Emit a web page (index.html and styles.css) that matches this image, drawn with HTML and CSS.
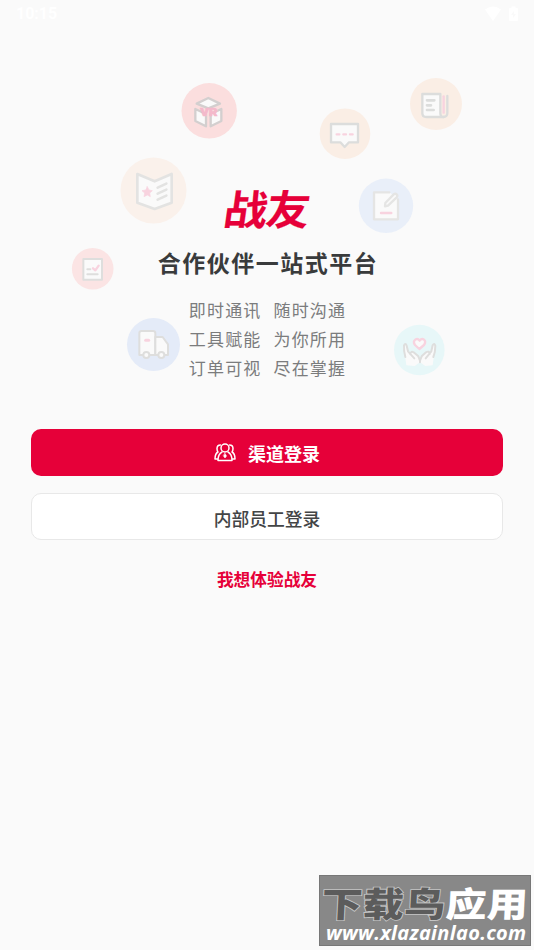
FILE: index.html
```html
<!DOCTYPE html>
<html lang="zh-CN">
<head>
<meta charset="utf-8">
<meta name="viewport" content="width=device-width, initial-scale=1">
<title>战友</title>
<link rel="stylesheet" href="styles.css">
</head>
<body>
<div class="screen">
  <header class="status">
    <span class="time">10:15</span>
    <svg class="status-icons" width="36" height="16" viewBox="0 0 36 16" fill="#fff">
      <path d="M1 3.5Q9 -2.500 17 3.500L9 15Z"/>
      <path d="M25 3q0-1 1-1h1.500V.5h4V2H33q1 0 1 1v11q0 1-1 1h-7q-1 0-1-1z"/>
      <path d="M30 5l-3 4h2v3l3-4h-2z" fill="#fafafa"/>
    </svg>
  </header>

  <svg class="decor" width="534" height="400" viewBox="0 0 534 400" aria-hidden="true">
    <circle cx="209.200" cy="110.800" r="27.700" fill="#fbdede"/>
    <circle cx="345" cy="133.700" r="25.300" fill="#faeee5"/>
    <circle cx="436" cy="104" r="26" fill="#faeee5"/>
    <circle cx="153.500" cy="190.500" r="33" fill="#faf1eb"/>
    <circle cx="386" cy="205.800" r="27.200" fill="#e9eff9"/>
    <circle cx="92.700" cy="268.800" r="20.800" fill="#fbe4e4"/>
    <circle cx="153.500" cy="344.500" r="26.500" fill="#e4ebf8"/>
    <circle cx="419.300" cy="350" r="25.300" fill="#e7f7f8"/>

    <g class="ink cube" transform="translate(170 70) scale(.3333)">
      <path d="M80 101L115 84L150 101L115 115Z"/>
      <path d="M76 117L108 132V169L76 153Z"/>
      <path d="M122 132L154 117V153L122 169Z"/>
      <text class="vr" x="91" y="137" textLength="51" lengthAdjust="spacingAndGlyphs">VR</text>
    </g>
    <g class="ink" transform="translate(310 70) scale(.3333)">
      <path d="M63 162H144V217H117L104 231L91 217H63Z"/>
      <path class="pink" d="M80 193H88M100 193H108M120 193H128"/>
      <path d="M337 72H391V129Q391 141 401 141H349Q337 141 337 129Z"/>
      <path class="line" d="M412 78V130Q412 141 400 141"/>
      <path class="bar" d="M351 91H373M351 106H363M351 120H371"/>
      <path class="pink bar" d="M401 79V128"/>
    </g>
    <g class="ink soft" transform="translate(110 150) scale(.3333)">
      <path d="M82 72L134 94L185 72V158L134 177L82 158Z"/>
      <path class="line" d="M143 113L169 101M143 131L169 119M143 149L169 137"/>
      <path class="star" d="M112 110L117 120L127 122L119 129L121 140L112 135L102 140L104 129L96 122L107 120Z"/>
    </g>
    <g class="ink note" transform="translate(350 170) scale(.3333)">
      <path d="M118 67H72V148H144V88"/>
      <path d="M106 99L131 73Q136 69 140 73Q144 77 140 82L114 107L105 109Z"/>
      <path class="pink" d="M93 129H124"/>
    </g>
    <g class="ink thin" transform="translate(60 240) scale(.3333)">
      <path d="M70 57H126V119H70Z"/>
      <path class="line" d="M82 88H91M82 103H113"/>
      <path class="pink" d="M99 85L106 91L116 77"/>
      <path d="M238 345V280Q238 273 245 273H279Q286 273 286 280V345Z"/>
      <path d="M286 291H308L324 313V345H286Z"/>
      <circle cx="259" cy="345" r="9"/><circle cx="304" cy="345" r="9"/>
      <path class="pink wide" d="M257 301H266"/>
    </g>
    <g class="ink thin" transform="translate(380 315) scale(.3333)">
      <path class="palm" d="M79 151L71 91L80 92L84 111L91 116Q92 107 101 112L115 124L120 137L125 124L138 112Q148 106 149 115L154 112L158 91L166 92L158 151L136 153L120 142L104 153Z"/>
      <path class="line" d="M76 126Q71 109 72 91Q76 83 80 92L84 109L103 130M91 118Q92 107 101 112L115 124L120 137L125 124L138 112Q148 106 149 117M137 130L154 109L158 91Q163 82 166 92Q166 113 160 126M120 137V142"/>
      <path class="pink heart" d="M118 102L105 90Q98 80 106 74Q113 69 119 77Q125 69 132 74Q139 80 132 90Z"/>
    </g>
  </svg>

  <main class="content">
    <h1 class="logo"><span class="logo-text">战友</span></h1>
    <h2 class="title">合作伙伴一站式平台</h2>
    <div class="features">
      <p><span>即时通讯</span><span>随时沟通</span></p>
      <p><span>工具赋能</span><span>为你所用</span></p>
      <p><span>订单可视</span><span>尽在掌握</span></p>
    </div>
    <button class="btn primary">
      <svg width="22" height="19" viewBox="0 0 22 19" fill="none" stroke="#fff" stroke-width="1.500" stroke-linejoin="round" stroke-linecap="round">
        <circle cx="11" cy="5" r="4"/>
        <path d="M8 9Q4 11 4 17.500H18Q18 11 14 9M6.500 2Q3 2 3 5.500Q3 8 4 9Q1 10.500 1 16H3.500M15.500 2Q19 2 19 5.500Q19 8 18 9Q21 10.500 21 16H18.500"/>
        <path d="M11 10.500L12.500 13L11 15L9.500 13Z" fill="#fff" stroke-width=".6"/>
      </svg>
      <span>渠道登录</span>
    </button>
    <button class="btn secondary">内部员工登录</button>
    <a class="trial">我想体验战友</a>
  </main>

  <footer class="watermark">
    <div class="mark-name"><span class="mark-dark">下载鸟</span><span>应用</span></div>
    <div class="mark-url">www.xlazainlao.com</div>
  </footer>
</div>
</body>
</html>
```
FILE: styles.css
```css
* { box-sizing: border-box; }
body {
  margin: 0;
  background: #fafafa;
  color: #393b3c;
  font-family: "Noto Sans CJK SC", sans-serif;
}
.screen {
  position: relative;
  display: flex;
  flex-direction: column;
  height: 950px;
  overflow: hidden;
}
.status {
  display: flex;
  justify-content: space-between;
  align-items: center;
  height: 28px;
  padding: 0 14px 0 16px;
  color: #fff;
}
.time { font: 700 16px/28px Roboto, sans-serif; }
.decor { position: absolute; top: 0; left: 0; }
.ink { fill: none; stroke: #dcdddc; stroke-width: 7; stroke-linecap: round; stroke-linejoin: round; }
.ink path, .ink circle { fill: #fafafa; }
.ink .line, .ink .bar { fill: none; }
.ink .bar { stroke-width: 8; }
.soft { stroke: #e3e3e2; stroke-width: 8; }
.note { stroke: #e5e5e4; stroke-width: 7; }
.thin { stroke: #dededd; stroke-width: 6; }
.cube { stroke: #d3cfcf; }
.ink .pink { stroke: #f8d3df; stroke-width: 7; fill: none; }
.ink .wide { stroke-width: 9; }
.ink .star { fill: #f8d3df; stroke: #f8d3df; stroke-width: 2; }
.ink .palm { stroke: none; }
.ink .heart { fill: #fafafa; }
.vr {
  fill: #f4b9cb;
  stroke: #f4b9cb;
  stroke-width: 2;
  font: 900 31px Roboto, sans-serif;
}
.content {
  position: relative;
  display: flex;
  flex-direction: column;
  align-items: center;
  padding: 155px 31px 0;
}
.logo { height: 48px; margin: 0; line-height: 48px; color: #e60039; }
.logo-text {
  display: block;
  font-size: 42px;
  font-weight: 700;
  letter-spacing: -1px;
  transform: skewX(-8deg) scale(1.040, .98);
  -webkit-text-stroke: .2px #e60039;
}
.title {
  margin: 13px 0 0;
  padding-left: 2px;
  font-size: 23px;
  font-weight: 700;
  line-height: 36px;
  letter-spacing: 1.500px;
}
.features { margin-top: 15px; padding-left: 1px; }
.features p {
  display: flex;
  gap: 12px;
  margin: 0;
  color: #7b7c7d;
  font-size: 17px;
  line-height: 29px;
  letter-spacing: 1.180px;
}
.btn {
  display: flex;
  justify-content: center;
  align-items: center;
  width: 100%;
  height: 47.500px;
  padding: 0;
  border: 0;
  border-radius: 10px;
  font: 700 18px/26px "Noto Sans CJK SC", sans-serif;
}
.primary { gap: 12px; margin-top: 46.700px; background: #e60039; color: #fff; }
.primary span { padding-top: 1px; }
.secondary {
  margin-top: 16.800px;
  padding-top: 2px;
  border: 1px solid #e8e8e8;
  background: #fff;
  color: #434546;
  font-size: 17.800px;
  font-weight: 500;
}
.trial {
  margin-top: 26.500px;
  color: #e60039;
  font-size: 16.700px;
  font-weight: 700;
  line-height: 24px;
}
.watermark {
  width: 212px;
  height: 71px;
  margin: auto 3px 4px auto;
  border: 1px solid #777;
  background: #888;
  color: #fff;
  white-space: nowrap;
}
.mark-name {
  width: 210px;
  height: 46px;
  padding-left: 2px;
  font-size: 41px;
  font-weight: 900;
  line-height: 52px;
  letter-spacing: .3px;
  transform: skewX(-3deg);
}
.mark-name span { display: inline-block; transform: scaleY(.84); }
.mark-dark {
  color: #5c5c5c;
  -webkit-text-stroke: 2px #c5c5c5;
  paint-order: stroke fill;
}
.mark-url {
  padding-left: 6px;
  font: italic 700 20px/22px "Open Sans", sans-serif;
  letter-spacing: .3px;
}
```
